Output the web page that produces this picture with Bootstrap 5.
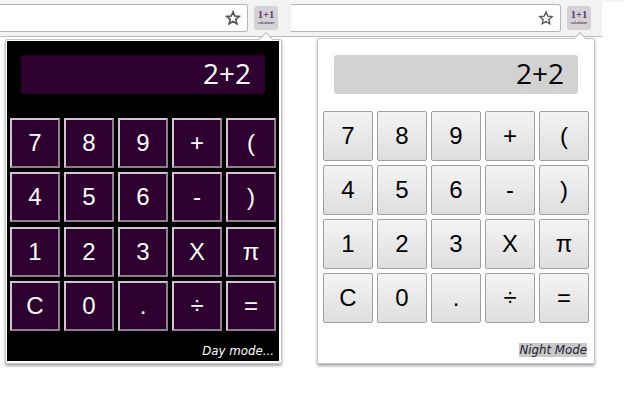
<!doctype html>
<html lang="en">
<head>
<meta charset="utf-8">
<title>Calculator</title>
<link rel="stylesheet" href="https://cdn.jsdelivr.net/npm/bootstrap@5.3.0/dist/css/bootstrap.min.css">
<style>
html,body{width:640px;height:400px;overflow:hidden;background:#fff;margin:0;}
.topstrip{width:624px;height:2px;background:#f4f4f4;}
.stage{width:602px;}
.shot-a{width:291px;}
.shot-b{width:311px;}
.topbar{height:35px;background:#f2f2f2;border-bottom:1px solid #bbb;}
.urlbox{height:28px;margin-top:2px;background:#fff;border:1px solid #b5b5b5;border-left:0;border-radius:0 3px 3px 0;}
.shot-a .urlbox{width:248px;}
.shot-b .urlbox{width:270px;}
.staricon{width:16px;height:16px;margin-right:6px;}
.extbtn{width:24px;height:24px;margin:4px 0 0 6px;background:#d4d2d4;border-radius:3px;color:#5a3a6c;font-family:"Liberation Serif",serif;line-height:1;}
.ext1{font-size:10.500px;font-weight:700;}
.ext2{font-size:3.600px;font-weight:700;margin-top:1px;letter-spacing:.1px;}
.popup{position:relative;border:1px solid #c4c4c4;border-radius:2px;box-shadow:0 2px 3px rgba(0,0,0,.35);font-family:"Liberation Sans",Arial,sans-serif;background:#fff;}
.shot-a .popup{width:277px;height:325px;margin:2px 0 0 5px;padding:1px 2px 2px 1px;}
.shot-b .popup{width:278px;height:326px;margin:1px 0 0 26px;}
.notch{position:absolute;top:-6px;width:10px;height:10px;background:#fff;border-top:1px solid #bbb;border-left:1px solid #bbb;transform:rotate(45deg);}
.shot-a .notch{left:255px;}
.shot-b .notch{left:257px;top:-5px;}
.innerdark{position:relative;z-index:1;background:#000;height:100%;padding-top:14px;}
.readout{position:relative;z-index:1;height:39px;width:244px;border-radius:3px;font-family:"Open Sans",sans-serif;font-size:28px;line-height:37px;text-align:right;padding-right:14px;}
.shot-a .readout{margin-left:14px;background:#2e0030;color:#fff;}
.shot-b .readout{margin:16px 0 0 16px;background:#d2d2d2;color:#000;}
.keygrid{display:grid;grid-template-columns:repeat(5,50px);gap:4px;}
.shot-a .keygrid{margin:24px 0 0 3px;row-gap:4.330px;}
.shot-b .keygrid{margin:17px 0 0 5px;}
.keycap{width:50px;height:50px;padding:0;border-radius:0;font-family:"Liberation Sans",Arial,sans-serif;font-size:24px;line-height:1;}
.shot-a .keycap{background:#2e0030;color:#fff;border:2px solid;border-color:#d0c4d0 #8c808c #8c808c #d0c4d0;}
.shot-b .keycap{background:linear-gradient(#f4f4f4,#dedede);color:#000;border:1px solid #a0a0a0;border-radius:2px;}
.modeline{font-family:"DejaVu Sans",sans-serif;font-style:italic;font-size:11.800px;line-height:16px;text-align:right;}
.shot-a .modeline{margin:12px 5px 0 0;color:#fff;}
.shot-b .modeline{margin:19px 7px 0 0;color:#223;}
.shot-b .modeline span{background:#c8c8c8;}
</style>
</head>
<body>
<div class="topstrip"></div>
<div class="stage d-flex">
  <div class="shot-a">
    <div class="topbar d-flex">
      <div class="urlbox d-flex align-items-center justify-content-end">
        <svg class="staricon" viewBox="0 0 18 18"><path d="M9 2.200l2 4.600 5 .5-3.800 3.300 1.100 4.900L9 13l-4.300 2.500 1.100-4.900L2 7.300l5-.5z" fill="none" stroke="#555" stroke-width="1.900"/></svg>
      </div>
      <div class="extbtn d-flex flex-column align-items-center justify-content-center"><span class="ext1">1+1</span><span class="ext2">calculator</span></div>
    </div>
    <div class="popup">
      <div class="notch"></div>
      <div class="innerdark">
        <div class="readout">2+2</div>
        <div class="keygrid">
          <button class="btn keycap">7</button><button class="btn keycap">8</button><button class="btn keycap">9</button><button class="btn keycap">+</button><button class="btn keycap">(</button>
          <button class="btn keycap">4</button><button class="btn keycap">5</button><button class="btn keycap">6</button><button class="btn keycap">-</button><button class="btn keycap">)</button>
          <button class="btn keycap">1</button><button class="btn keycap">2</button><button class="btn keycap">3</button><button class="btn keycap">X</button><button class="btn keycap">π</button>
          <button class="btn keycap">C</button><button class="btn keycap">0</button><button class="btn keycap">.</button><button class="btn keycap">÷</button><button class="btn keycap">=</button>
        </div>
        <div class="modeline">Day mode...</div>
      </div>
    </div>
  </div>
  <div class="shot-b">
    <div class="topbar d-flex">
      <div class="urlbox d-flex align-items-center justify-content-end">
        <svg class="staricon" viewBox="0 0 18 18"><path d="M9 2.200l2 4.600 5 .5-3.800 3.300 1.100 4.900L9 13l-4.300 2.500 1.100-4.900L2 7.300l5-.5z" fill="none" stroke="#555" stroke-width="1.500"/></svg>
      </div>
      <div class="extbtn d-flex flex-column align-items-center justify-content-center"><span class="ext1">1+1</span><span class="ext2">calculator</span></div>
    </div>
    <div class="popup">
      <div class="notch"></div>
      <div class="readout">2+2</div>
      <div class="keygrid">
        <button class="btn keycap">7</button><button class="btn keycap">8</button><button class="btn keycap">9</button><button class="btn keycap">+</button><button class="btn keycap">(</button>
        <button class="btn keycap">4</button><button class="btn keycap">5</button><button class="btn keycap">6</button><button class="btn keycap">-</button><button class="btn keycap">)</button>
        <button class="btn keycap">1</button><button class="btn keycap">2</button><button class="btn keycap">3</button><button class="btn keycap">X</button><button class="btn keycap">π</button>
        <button class="btn keycap">C</button><button class="btn keycap">0</button><button class="btn keycap">.</button><button class="btn keycap">÷</button><button class="btn keycap">=</button>
      </div>
      <div class="modeline"><span>Night Mode</span></div>
    </div>
  </div>
</div>
<script src="https://cdn.jsdelivr.net/npm/bootstrap@5.3.0/dist/js/bootstrap.bundle.min.js"></script>
</body>
</html>
